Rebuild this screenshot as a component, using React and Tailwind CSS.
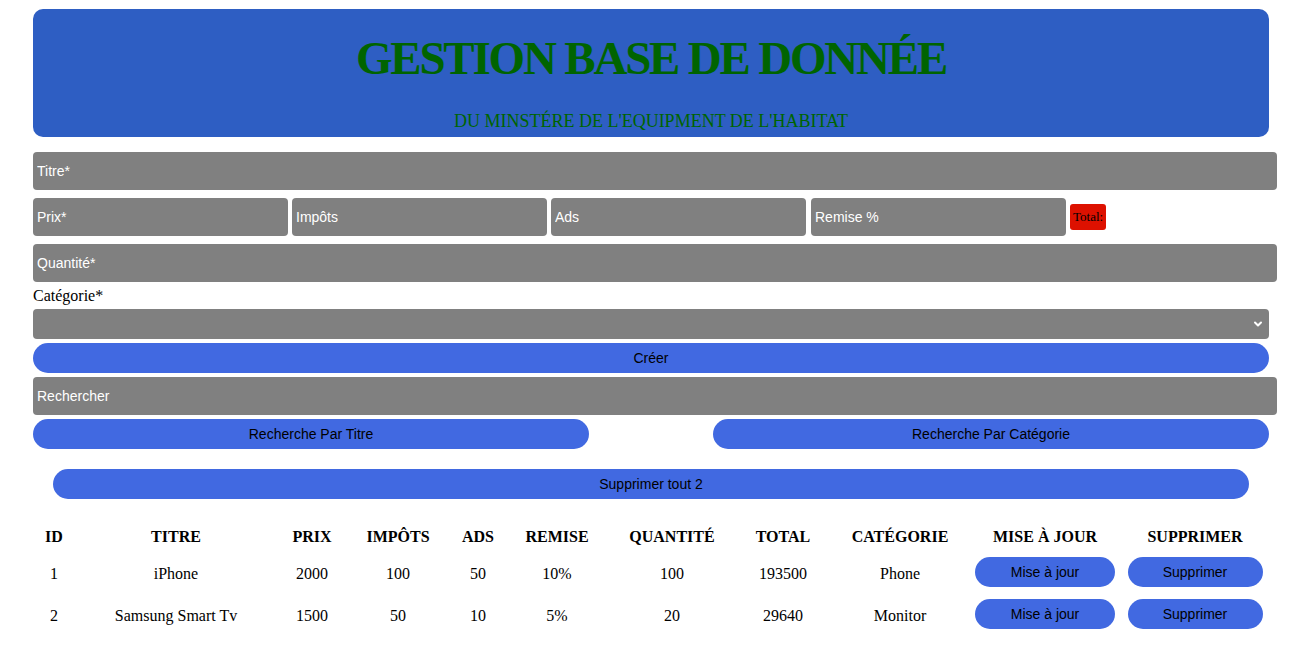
import React from "react";

const serif = "font-['Liberation_Serif',serif]";
const sans = "font-['Liberation_Sans',Arial,sans-serif]";

const rows = [
  { id: 1, titre: "iPhone", prix: 2000, impots: 100, ads: 50, remise: "10%", quantite: 100, total: 193500, categorie: "Phone" },
  { id: 2, titre: "Samsung Smart Tv", prix: 1500, impots: 50, ads: 10, remise: "5%", quantite: 20, total: 29640, categorie: "Monitor" },
];

const cols = [
  ["ID", "w-[42px]"],
  ["TITRE", "w-[202px]"],
  ["PRIX", "w-[70px]"],
  ["IMPÔTS", "w-[102px]"],
  ["ADS", "w-[58px]"],
  ["REMISE", "w-[100px]"],
  ["QUANTITÉ", "w-[130px]"],
  ["TOTAL", "w-[92px]"],
  ["CATÉGORIE", "w-[142px]"],
  ["MISE À JOUR", "w-[148px]"],
  ["SUPPRIMER", "w-[152px]"],
];

const Field = ({ placeholder, className = "" }) => (
  <input
    type="text"
    placeholder={placeholder}
    className={`h-[38px] rounded-[4px] bg-[#808080] px-[4px] text-[14px] text-white placeholder:text-white outline-none ${sans} ${className}`}
  />
);

const BlueButton = ({ children, className = "" }) => (
  <button
    type="button"
    className={`h-[30px] rounded-full bg-[#4169e1] text-[14px] text-black ${sans} ${className}`}
  >
    {children}
  </button>
);

export default function App() {
  return (
    <div className="min-h-screen bg-white pt-[9px]">
      <div className="ml-[33px] flex w-[1236px] flex-col">
        {/* entête */}
        <header className="flex h-[128px] flex-col items-center rounded-[10px] bg-[#2e5ec3]">
          <h1 className={`mt-[19px] text-[47px] font-bold leading-[60px] tracking-[-2.2px] text-[#006400] ${serif}`}>
            GESTION BASE DE DONNÉE
          </h1>
          <h2 className={`mt-[23px] text-[18px] leading-[20px] text-[#006400] ${serif}`}>
            DU MINSTÉRE DE L'EQUIPMENT DE L'HABITAT
          </h2>
        </header>

        {/* formulaire */}
        <div className="mt-[15px] flex flex-col">
          <Field placeholder="Titre*" className="w-[1244px]" />
          <div className="mt-[8px] flex items-center gap-[4px]">
            <Field placeholder="Prix*" className="w-[255px]" />
            <Field placeholder="Impôts" className="w-[255px]" />
            <Field placeholder="Ads" className="w-[255px]" />
            <Field placeholder="Remise %" className="w-[255px] ml-[1px]" />
            <span className={`flex h-[26px] items-center rounded-[3px] bg-[#dd1100] px-[3px] text-[13px] text-black ${serif}`}>
              Total:
            </span>
          </div>
          <Field placeholder="Quantité*" className="mt-[8px] w-[1244px]" />
          <label className={`mt-[5px] text-[16px] leading-[18px] text-black ${serif}`}>Catégorie*</label>
          <div className="relative mt-[4px] h-[30px]">
            <select className="h-[30px] w-full appearance-none rounded-[4px] bg-[#808080] outline-none" />
            <svg
              className="pointer-events-none absolute right-[6px] top-[10px]"
              width="10"
              height="10"
              viewBox="0 0 10 10"
              fill="none"
              stroke="white"
              strokeWidth="2"
              strokeLinecap="round"
              strokeLinejoin="round"
            >
              <path d="M2 3.5 L5 6.5 L8 3.5" />
            </svg>
          </div>
          <BlueButton className="mt-[4px] w-full">Créer</BlueButton>
          <Field placeholder="Rechercher" className="mt-[4px] w-[1244px]" />
          <div className="mt-[4px] flex justify-between">
            <BlueButton className="w-[556px]">Recherche Par Titre</BlueButton>
            <BlueButton className="w-[556px]">Recherche Par Catégorie</BlueButton>
          </div>
          <BlueButton className="mx-auto mt-[20px] w-[1196px]">Supprimer tout 2</BlueButton>
        </div>

        {/* tableau */}
        <table className={`mt-[21px] w-[1238px] table-fixed text-center text-[16px] text-black ${serif}`}>
          <thead>
            <tr className="h-[33px]">
              {cols.map(([label, w]) => (
                <th key={label} className={`${w} font-bold`}>
                  {label}
                </th>
              ))}
            </tr>
          </thead>
          <tbody>
            {rows.map((r) => (
              <tr key={r.id} className="h-[42px]">
                <td>{r.id}</td>
                <td>{r.titre}</td>
                <td>{r.prix}</td>
                <td>{r.impots}</td>
                <td>{r.ads}</td>
                <td>{r.remise}</td>
                <td>{r.quantite}</td>
                <td>{r.total}</td>
                <td>{r.categorie}</td>
                <td>
                  <BlueButton className="w-[140px] -translate-y-[2px]">Mise à jour</BlueButton>
                </td>
                <td>
                  <BlueButton className="w-[135px] -translate-y-[2px]">Supprimer</BlueButton>
                </td>
              </tr>
            ))}
          </tbody>
        </table>
      </div>
    </div>
  );
}
